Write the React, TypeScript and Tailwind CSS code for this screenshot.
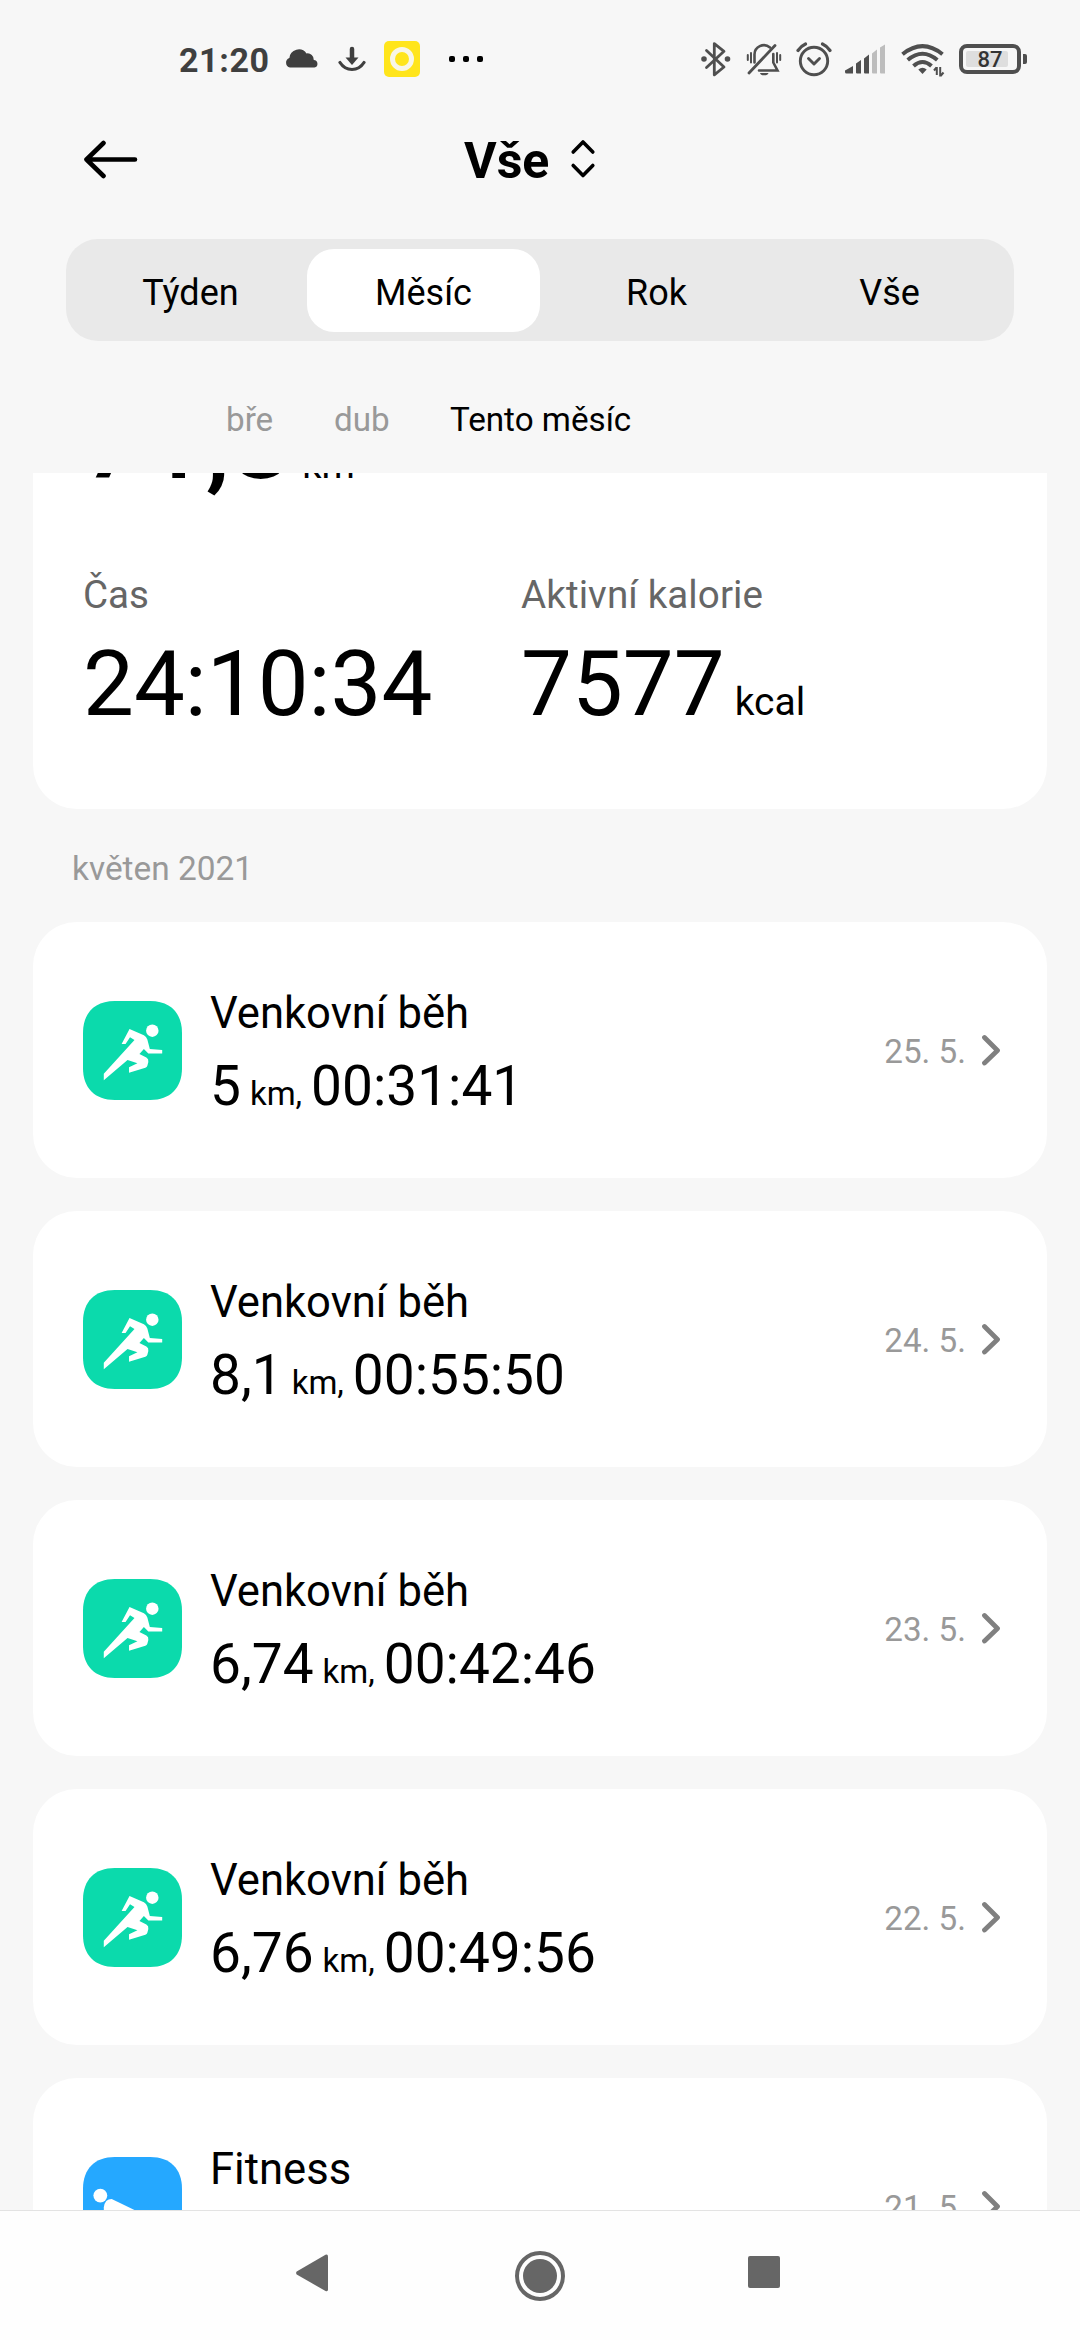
import React from "react";

const workouts = [
  { title: "Venkovní běh", km: "5", time: "00:31:41", date: "25. 5.", kind: "run" },
  { title: "Venkovní běh", km: "8,1", time: "00:55:50", date: "24. 5.", kind: "run" },
  { title: "Venkovní běh", km: "6,74", time: "00:42:46", date: "23. 5.", kind: "run" },
  { title: "Venkovní běh", km: "6,76", time: "00:49:56", date: "22. 5.", kind: "run" },
  { title: "Fitness", km: "", time: "", date: "21. 5.", kind: "fitness" },
];

function StatusBar() {
  return (
    <div className="flex h-[118px] shrink-0 items-center pr-[53px] pl-[179px] text-[#3f3f3f]">
      <span className="w-[106px] pt-[1px] text-[34px] leading-[40px] font-bold tracking-[0.6px]">21:20</span>
      <svg className="h-[34px] w-[34px]" viewBox="0 0 34 34" fill="#3f3f3f">
        <path d="M5 25.500a5 5 0 0 1-.6-9.600A9.400 9.400 0 0 1 21.500 11.400A6.200 6.200 0 0 1 28.800 18A3.800 3.800 0 0 1 29.500 25.500z" />
      </svg>
      <svg className="ml-[19px] h-[34px] w-[28px]" viewBox="0 0 28 34" fill="none" stroke="#3f3f3f" strokeWidth="3.200" strokeLinecap="round">
        <path d="M14 7v10" strokeWidth="4.500" />
        <path d="M7.500 15.500h13L14 23z" fill="#3f3f3f" stroke="none" />
        <path d="M2 20.500Q6.500 27.500 14 27.500T26 20.500" />
      </svg>
      <div className="ml-[18px] flex h-9 w-9 items-center justify-center rounded-[5px] bg-[#ffe51c]">
        <div className="h-6 w-6 rounded-full border-[5px] border-[#f8f6e6]" />
      </div>
      <div className="ml-[29px] flex gap-2">
        <i className="h-1.5 w-1.5 rounded-[2px] bg-black" />
        <i className="h-1.5 w-1.5 rounded-[2px] bg-black" />
        <i className="h-1.5 w-1.5 rounded-[2px] bg-black" />
      </div>

      <svg className="ml-auto h-9 w-[30px]" viewBox="0 0 30 36" fill="none" stroke="#4f4f4f" strokeWidth="2.800" strokeLinejoin="round" strokeLinecap="round">
        <path d="M5.500 9.500L23 26L13.300 33.800V2.600L23 10.300L5.500 26.500" />
        <circle cx="3" cy="18" r="1.400" fill="#4f4f4f" />
        <circle cx="26.500" cy="18" r="1.400" fill="#4f4f4f" />
      </svg>
      <svg className="ml-[15px] h-9 w-[36px]" viewBox="0 0 36 36" fill="none" stroke="#4f4f4f" strokeWidth="2.600" strokeLinecap="round">
        <path d="M3 32L29 4.500" strokeWidth="2.800" />
        <path d="M8.500 21.500V14A9.400 9.400 0 0 1 24 6.500" />
        <path d="M27.300 13V21.500L31.500 29.500H13" />
        <path d="M14 32h8.500a4.300 2.800 0 0 1-8.500 0z" fill="#4f4f4f" stroke="none" />
        <path d="M1.800 14v5M5 12v9.500M31 12v9.500M34.200 14v5" strokeWidth="2" />
      </svg>
      <svg className="ml-[14px] h-9 w-[36px]" viewBox="0 0 36 36" fill="none" stroke="#4f4f4f" strokeWidth="2.900" strokeLinecap="round" strokeLinejoin="round">
        <circle cx="18" cy="20" r="13.700" />
        <path d="M12.500 17.500l5.500 5.500 5.500-5.500" />
        <path d="M2 9.500Q5 5 9.500 3M26.500 3Q31 5 34 9.500" strokeWidth="3.200" />
      </svg>
      <svg className="ml-[13px] h-[30px] w-[41px]" viewBox="0 0 41 30" fill="#4f4f4f">
        <path d="M0 26.500L8 22v7.500H1.500a1.500 1.500 0 0 1-1.500-1.500zM11 19.500L16 16v13.500H12a1 1 0 0 1-1-1zM19 14.500L24 10.500v19H20a1 1 0 0 1-1-1z" />
        <path d="M27 9.500L32 5.500v24H28a1 1 0 0 1-1-1zM35 3.500L40 .5v29H36a1 1 0 0 1-1-1z" fill="#bdbdbd" />
      </svg>
      <svg className="ml-[15px] h-9 w-[44px]" viewBox="0 0 44 36" fill="none" stroke="#4f4f4f" strokeWidth="4">
        <path d="M1.500 13.200Q21.500 -3 41.500 13.200" />
        <path d="M6.700 19Q21.500 6.500 36.300 19" />
        <path d="M12.500 25Q21.500 17 30.500 25" />
        <path d="M17.300 28.500Q21.500 25 25.700 28.500L21.500 33z" fill="#4f4f4f" stroke="none" />
        <path d="M35.800 26v8M39.200 26v9.500M33 29.500l2.500-3M39.500 35l3-3.500" strokeWidth="2" />
      </svg>
      <div className="ml-[14px] flex h-[30px] w-[62px] items-center justify-start rounded-[8px] border-4 border-[#4f4f4f] bg-[#f7f7f7] pl-[3px]">
        <div className="flex h-4 w-[42px] items-center justify-center rounded-[2px] bg-[#dedede]">
          <span className="pt-[2px] pl-[6px] text-[22px] leading-[22px] font-medium text-[#333]">87</span>
        </div>
      </div>
      <div className="ml-[2px] h-[10px] w-1 rounded-r-[2px] bg-[#4f4f4f]" />
    </div>
  );
}

function Header() {
  return (
    <div className="flex h-[82px] shrink-0 items-center pl-[83px]">
      <svg className="h-10 w-14" viewBox="0 0 56 40" fill="none" stroke="#000" strokeWidth="4.600" strokeLinecap="round" strokeLinejoin="round">
        <path d="M20.500 4L3.500 20.500L20.500 37M3.500 20.500H52" />
      </svg>
      <h1 className="ml-[325px] pt-1 text-[50px] leading-[60px] font-bold text-black">Vše</h1>
      <svg className="ml-[20px] h-10 w-7" viewBox="0 0 28 40" fill="none" stroke="#000" strokeWidth="3.600" strokeLinecap="round" strokeLinejoin="round">
        <path d="M4.200 13L14 3L23.800 13M4.200 26.500L14 36.500L23.800 26.500" />
      </svg>
    </div>
  );
}

function Tabs() {
  return (
    <div className="mx-[66px] mt-[39px] grid h-[102px] shrink-0 grid-cols-4 rounded-[32px] bg-[#e9e9e9] px-2 pt-[10px] pb-[9px] text-[36px] leading-[44px] text-black">
      {["Týden", "Měsíc", "Rok", "Vše"].map((t, i) => (
        <div
          key={t}
          className={
            i === 1
              ? "flex items-center justify-center rounded-[27px] bg-white pt-1"
              : "flex items-center justify-center pt-1"
          }
        >
          {t}
        </div>
      ))}
    </div>
  );
}

function RunIcon() {
  return (
    <svg className="mr-px h-[99px] w-[99px]" viewBox="0 0 100 100">
      <path d="M0 32C0 12 12 0 32 0H68C88 0 100 12 100 32V68C100 88 88 100 68 100H32C12 100 0 88 0 68Z" fill="#0bdaac" />
      <circle cx="70" cy="30" r="6.300" fill="#fff" />
      <path
        d="M47 28.300L61.500 34.500Q64 36 65 39L67.500 48.500L80 49.500V53H66L61.500 48.500L57 53.500L64 57Q66.500 58.500 66 61.500L65 65.500Q64.500 67 63 67.500L46.500 72.500V67L55 63L45 59.500L21 80V73.500L52 39.500L47.500 36.500L43 43.500H39Z"
        fill="#fff"
      />
    </svg>
  );
}

function FitnessIcon() {
  return (
    <svg className="mr-px h-[99px] w-[99px]" viewBox="0 0 100 100">
      <path d="M0 32C0 12 12 0 32 0H68C88 0 100 12 100 32V68C100 88 88 100 68 100H32C12 100 0 88 0 68Z" fill="#25a8ff" />
      <circle cx="17.500" cy="39" r="7" fill="#fff" />
      <path d="M21 58V51Q22 42.500 29 42.500L80 67V75H21Z" fill="#fff" />
    </svg>
  );
}

function Summary() {
  return (
    <section className="mx-[33px] h-[336px] shrink-0 overflow-hidden rounded-b-[44px] bg-white pl-[50px] text-black">
      <div className="-mt-[96px] h-32 text-[108px] leading-[128px] font-medium whitespace-nowrap">
        71,8<span className="ml-[11px] text-[38px] font-normal">km</span>
      </div>
      <div className="mt-[66px] flex">
        <div className="w-[438px]">
          <div className="text-[38.6px] leading-[48px] text-[#666]">Čas</div>
          <div className="mt-[11px] text-[90.6px] leading-[108px]">24:10:34</div>
        </div>
        <div>
          <div className="text-[38.6px] leading-[48px] tracking-[0.1px] text-[#666]">Aktivní kalorie</div>
          <div className="mt-[11px] text-[90.6px] leading-[108px] whitespace-nowrap">
            7577<span className="ml-[10px] text-[39px]">kcal</span>
          </div>
        </div>
      </div>
    </section>
  );
}

export default function App() {
  return (
    <div className="flex h-[2340px] w-[1080px] flex-col overflow-hidden bg-[#f7f7f7] font-['Roboto',sans-serif]">
      <StatusBar />
      <Header />
      <Tabs />
      <div className="flex h-[132px] shrink-0 items-center pt-[25px] pl-[226px] text-[33.2px] leading-[40px] text-[#999]">
        <span className="w-[108px]">bře</span>
        <span className="w-[116px]">dub</span>
        <span className="text-black">Tento měsíc</span>
      </div>
      <main className="flex h-[1737px] shrink-0 flex-col overflow-hidden">
        <Summary />
        <h2 className="h-[113px] shrink-0 pt-[40px] pl-[72px] text-[33.4px] leading-[40px] text-[#999]">květen 2021</h2>
        <div className="flex flex-col gap-[33px]">
          {workouts.map((w) => (
            <article key={w.date} className="mx-[33px] flex h-64 shrink-0 items-center rounded-[44px] bg-white pr-[46px] pl-[50px]">
              {w.kind === "run" ? <RunIcon /> : <FitnessIcon />}
              <div className="ml-[27px] self-start pt-[66px] text-black">
                <div className="text-[43.6px] leading-[52px]">{w.title}</div>
                {w.km && (
                  <div className="mt-[14px] text-[55px] leading-[64px] whitespace-nowrap">
                    {w.km}
                    <span className="mr-[9px] ml-[9px] text-[33px]">km,</span>
                    {w.time}
                  </div>
                )}
              </div>
              <span className="mr-[15px] ml-auto pt-[3px] text-[33.2px] leading-[40px] text-[#999]">{w.date}</span>
              <svg className="h-8 w-5" viewBox="0 0 20 32" fill="none" stroke="#808080" strokeWidth="4.800" strokeLinecap="round" strokeLinejoin="round">
                <path d="M3.500 3.500L16.500 16.500L3.500 29" />
              </svg>
            </article>
          ))}
        </div>
      </main>
      <nav className="flex h-[130px] shrink-0 items-center border-t border-[#e3e3e3] bg-[#fefefe] pl-[296px]">
        <svg className="-mt-[6px] h-[38px] w-8" viewBox="0 0 32 38" fill="#666">
          <path d="M.7 17.500L29.500 .8Q32 0 32 2.500V35.500Q32 38 29.500 37L.7 20.500Q-.5 19 .7 17.500Z" />
        </svg>
        <div className="ml-[187px] flex h-[50px] w-[50px] items-center justify-center rounded-full border-4 border-[#666]">
          <div className="h-[34px] w-[34px] rounded-full bg-[#666]" />
        </div>
        <div className="-mt-[7px] ml-[183px] h-8 w-8 rounded-[2px] bg-[#666]" />
      </nav>
    </div>
  );
}
